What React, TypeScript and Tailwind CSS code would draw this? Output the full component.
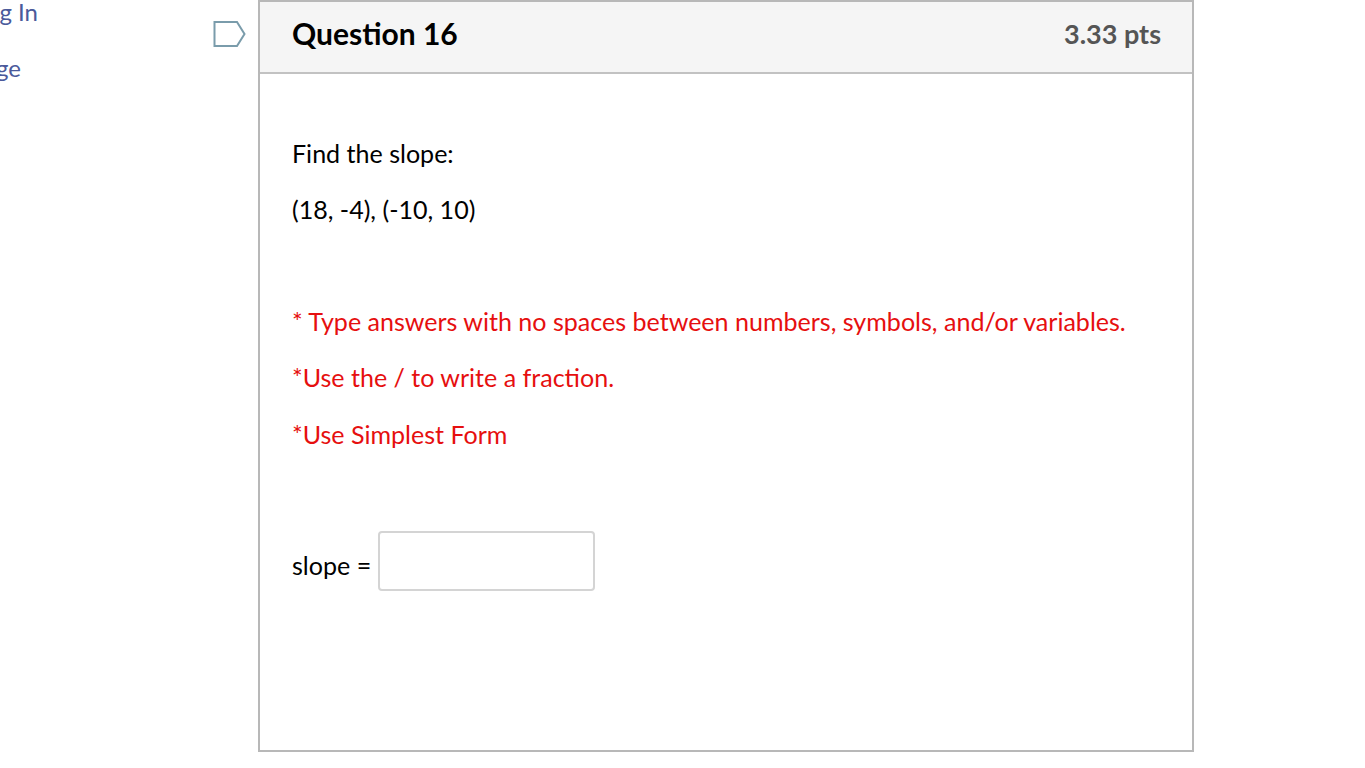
export default function App() {
  return (
    <div className="flex h-[768px] w-[1365px] overflow-hidden bg-white font-['Lato',sans-serif] text-black">
      <nav className="flex w-[38px] shrink-0 flex-col items-end overflow-hidden text-[24px] leading-[28px] text-[#4b5a9b]">
        <a className="mt-[-2px] whitespace-nowrap">Logging In</a>
        <a className="mr-[17px] mt-[28px] whitespace-nowrap">Message</a>
      </nav>
      <div className="ml-[175px] mt-[20px] w-[33px] shrink-0">
        <svg width="33" height="28" viewBox="0 0 33 28" fill="none">
          <path d="M1.5 2H24L31.5 14L24 26H1.5Z" stroke="#7a9cab" strokeWidth="2" />
        </svg>
      </div>
      <main className="ml-[12px] mb-[16px] flex w-[936px] shrink-0 flex-col border-2 border-[#b8b8b8]">
        <header className="flex h-[72px] items-start justify-between border-b-2 border-[#c2c2c2] bg-[#f5f5f5] pl-[32px] pr-[31px]">
          <h2 className="text-[30px] leading-[62px] font-bold">Question 16</h2>
          <span className="text-[27px] leading-[64px] font-bold text-[#555555]">3.33 pts</span>
        </header>
        <section className="px-[32px] pt-[61px] text-[25.06px] leading-[36px]">
          <p>Find the slope:</p>
          <p className="mt-[20px]">(18, -4), (-10, 10)</p>
          <p className="mt-[76px] text-[#e60f0f]">* Type answers with no spaces between numbers, symbols, and/or variables.</p>
          <p className="mt-[20px] text-[#e60f0f]">*Use the / to write a fraction.</p>
          <p className="mt-[21px] text-[#e60f0f]">*Use Simplest Form</p>
          <div className="mt-[79px] flex items-center gap-[7px]">
            <span className="mt-[8px]">slope =</span>
            <input className="h-[60px] w-[217px] rounded-[4px] border-2 border-[#d4d4d4] bg-white" />
          </div>
        </section>
      </main>
    </div>
  );
}
